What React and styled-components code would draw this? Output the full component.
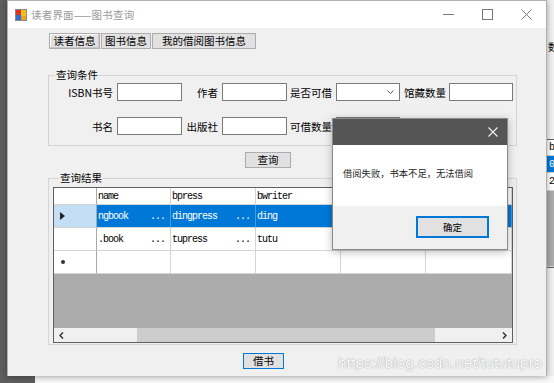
import React from 'react';
import styled, { createGlobalStyle } from 'styled-components';

const GlobalStyle = createGlobalStyle`
  html, body {
    margin: 0;
    padding: 0;
  }
  body {
    width: 554px;
    height: 383px;
    overflow: hidden;
    font-family: "Noto Sans CJK SC", "Noto Sans", sans-serif;
  }
  * {
    box-sizing: border-box;
  }
`;

const cjk = `"Noto Sans CJK SC", "Noto Sans", sans-serif`;
const mono = `"Liberation Mono", "DejaVu Sans Mono", monospace`;

// 桌面和后面的窗口
const Desktop = styled.div`
  position: relative;
  width: 554px;
  height: 383px;
  overflow: hidden;
  background: #f9f9f9;
`;

const DarkWindow = styled.div`
  position: absolute;
  left: 0;
  top: 0;
  width: 35px;
  height: 383px;
  background: #5e5e5e;
`;

const BackWindow = styled.div`
  position: absolute;
  left: 546px;
  top: 0;
  width: 30px;
  height: 376px;
  background: #f0f0f0;
  display: flex;
  flex-direction: column;
  font-family: ${mono};
  font-size: 10px;
  overflow: hidden;
`;

const BackLabel = styled.div`
  margin: 39px 0 0 2px;
  font-family: ${cjk};
  font-size: 10.5px;
  height: 14px;
`;

const BackGrid = styled.div`
  margin-top: 86px;
  border: 1px solid #646464;
  border-right: none;
  display: flex;
  flex-direction: column;
`;

const BackRow = styled.div`
  height: ${(p) => p.$h}px;
  padding-left: 2px;
  display: flex;
  align-items: center;
  background: ${(p) => p.$bg || '#fff'};
  color: ${(p) => (p.$bg === '#0078d7' ? '#fff' : '#000')};
  border-bottom: 1px solid #d0d0d0;
`;

// 主窗口
const Window = styled.div`
  position: absolute;
  left: 7px;
  top: 0;
  width: 540px;
  height: 376px;
  display: flex;
  flex-direction: column;
  box-shadow: 0 1px 6px rgba(0, 0, 0, 0.35);
  border: 1px solid #b0b0b0;
  border-bottom: none;
`;

const TitleBar = styled.div`
  height: 27px;
  flex-shrink: 0;
  background: #fff;
  display: flex;
  align-items: center;
  padding-left: 7px;
`;

const TitleText = styled.span`
  margin-left: 4px;
  font-size: 10.5px;
  color: #9a9a9a;
  letter-spacing: 0.2px;
`;

const Controls = styled.div`
  margin-left: auto;
  display: flex;
  height: 100%;
`;

const ControlButton = styled.div`
  width: 39px;
  height: 100%;
  display: flex;
  align-items: center;
  justify-content: center;
`;

const Body = styled.div`
  position: relative;
  flex: 1;
  background: #f0f0f0;
  padding: 5px 0 0 40px;
  display: flex;
  flex-direction: column;
  align-items: flex-start;
`;

const Tabs = styled.div`
  display: flex;
  gap: 1px;
  margin-left: 1px;
`;

const Button = styled.div`
  width: ${(p) => p.$w}px;
  height: ${(p) => p.$h || 16}px;
  background: #e1e1e1;
  border: ${(p) => (p.$focus ? '1px solid #0078d7' : '1px solid #adadad')};
  font-size: 10.5px;
  color: #000;
  display: flex;
  align-items: center;
  justify-content: center;
  white-space: nowrap;
  line-height: 1;
  margin-left: ${(p) => p.$ml || 0}px;
  margin-top: ${(p) => p.$mt || 0}px;
  box-shadow: ${(p) => (p.$raised ? 'inset -1px -1px 0 #c8c8c8, inset 1px 1px 0 #fff' : 'none')};
`;

const Group = styled.fieldset`
  margin: ${(p) => p.$mt}px 0 0 0;
  width: 469px;
  border: 1px solid #d5d5d5;
  padding: ${(p) => p.$pad};
  min-width: 0;
`;

const Legend = styled.legend`
  margin-left: 6px;
  padding: 0 1px;
  font-size: 10.5px;
  line-height: 14px;
  color: #000;
`;

const FormGrid = styled.div`
  display: grid;
  grid-template-columns: 68px 65px 40px 65px 49px 64px 49px 64px;
  grid-auto-rows: 18px;
  row-gap: 16px;
`;

const Label = styled.div`
  font-size: 10.5px;
  color: #000;
  display: flex;
  align-items: center;
  justify-content: flex-end;
  padding-right: ${(p) => p.$pr || 4}px;
  white-space: nowrap;
`;

const TextBox = styled.div`
  background: #fff;
  border: 1px solid #7a7a7a;
`;

const Combo = styled(TextBox)`
  display: flex;
  align-items: center;
  justify-content: flex-end;
  padding-right: 5px;
`;

// 数据表格
const DataGrid = styled.div`
  width: 460px;
  height: 156px;
  border: 1px solid #5f5f5f;
  background: #ababab;
  display: flex;
  flex-direction: column;
  font-family: ${mono};
  font-size: 10px;
  letter-spacing: -1px;
`;

const GridRow = styled.div`
  display: grid;
  grid-template-columns: 43px 74px 85px 85px 85px 1fr;
  height: ${(p) => p.$h}px;
  flex-shrink: 0;
`;

const Cell = styled.div`
  background: ${(p) => (p.$selected ? '#0078d7' : '#fff')};
  color: ${(p) => (p.$selected ? '#fff' : '#000')};
  border-right: 1px solid ${(p) => (p.$selected ? '#4a9ae0' : '#d4d4d4')};
  border-bottom: 1px solid #d4d4d4;
  display: flex;
  align-items: center;
  justify-content: space-between;
  padding: 0 5px 0 1px;
  white-space: nowrap;
  overflow: hidden;
`;

const RowHeader = styled(Cell)`
  background: ${(p) => (p.$current ? '#c3def5' : '#fff')};
  border-right: 1px solid #a8a8a8;
  justify-content: flex-start;
  padding-left: 6px;
  color: #000;
`;

const Dots = styled.span`
  letter-spacing: -1px;
`;

const EmptyArea = styled.div`
  flex: 1;
`;

const HScroll = styled.div`
  height: 14px;
  flex-shrink: 0;
  background: #f0f0f0;
  display: flex;
  align-items: center;
`;

const ScrollArrow = styled.div`
  height: 100%;
  display: flex;
  align-items: center;
  justify-content: ${(p) => (p.$right ? 'flex-end' : 'flex-start')};
  padding: 0 5px;
  width: ${(p) => p.$w}px;
`;

const Thumb = styled.div`
  width: 298px;
  height: 100%;
  background: #cdcdcd;
`;

// 消息框
const Dialog = styled.div`
  position: absolute;
  left: 324px;
  top: 90px;
  width: 176px;
  height: 132px;
  border: 1px solid #8a8a8a;
  box-shadow: 0 2px 8px rgba(0, 0, 0, 0.28);
  background: #f0f0f0;
  display: flex;
  flex-direction: column;
`;

const DialogTitle = styled.div`
  height: 26px;
  background: #555555;
  display: flex;
  align-items: center;
  justify-content: flex-end;
  padding-right: 9px;
`;

const DialogBody = styled.div`
  height: 61px;
  background: #fff;
  display: flex;
  align-items: center;
  padding: 0 0 6px 10px;
  font-size: 9.3px;
  color: #1e1e1e;
`;

const DialogFooter = styled.div`
  flex: 1;
  display: flex;
  align-items: center;
  justify-content: flex-end;
  padding: 0 18px 2px 0;
`;

const OkButton = styled.div`
  width: 73px;
  height: 22px;
  background: #e1e1e1;
  border: 2px solid #0078d7;
  font-size: 9.5px;
  display: flex;
  align-items: center;
  justify-content: center;
`;

const Watermark = styled.div`
  position: absolute;
  left: 330px;
  top: 326px;
  font-family: "Liberation Sans", Arial, sans-serif;
  font-size: 15.5px;
  color: #fbfbfb;
  text-shadow: 0 0 1px rgba(0, 0, 0, 0.35), 0 0 2px rgba(0, 0, 0, 0.12);
  white-space: nowrap;
`;

const AppIcon = () => (
  <svg width="12" height="12" viewBox="0 0 12 12">
    <rect x="0.5" y="0.5" width="11" height="11" fill="#fff" stroke="#8a8a8a" />
    <rect x="1" y="1" width="5" height="5" fill="#e0301e" />
    <rect x="6" y="1" width="5" height="6" fill="#f4c020" />
    <rect x="1" y="6" width="5" height="5" fill="#2a6fd6" />
    <rect x="6" y="7" width="5" height="4" fill="#f0a020" />
  </svg>
);

const rows = [
  { name: 'ngbook', press: 'dingpress', writer: 'ding', selected: true },
  { name: '.book', press: 'tupress', writer: 'tutu' },
];

export default function App() {
  return (
    <Desktop>
      <GlobalStyle />
      <DarkWindow />
      <BackWindow>
        <BackLabel>数</BackLabel>
        <BackGrid>
          <BackRow $h={16}>b</BackRow>
          <BackRow $h={17} $bg="#0078d7">0</BackRow>
          <BackRow $h={18}>21</BackRow>
          <BackRow $h={76} $bg="#ababab" />
        </BackGrid>
      </BackWindow>

      <Window>
        <TitleBar>
          <AppIcon />
          <TitleText>读者界面——图书查询</TitleText>
          <Controls>
            <ControlButton>
              <svg width="11" height="11" viewBox="0 0 11 11">
                <line x1="0" y1="5.5" x2="11" y2="5.5" stroke="#777" strokeWidth="1" />
              </svg>
            </ControlButton>
            <ControlButton>
              <svg width="11" height="11" viewBox="0 0 11 11">
                <rect x="0.5" y="0.5" width="10" height="10" fill="none" stroke="#777" strokeWidth="1" />
              </svg>
            </ControlButton>
            <ControlButton>
              <svg width="11" height="11" viewBox="0 0 11 11">
                <path d="M0.5 0.5 L10.5 10.5 M10.5 0.5 L0.5 10.5" stroke="#777" strokeWidth="1" />
              </svg>
            </ControlButton>
          </Controls>
        </TitleBar>

        <Body>
          <Tabs>
            <Button $w={51} $raised>读者信息</Button>
            <Button $w={50}>图书信息</Button>
            <Button $w={104}>我的借阅图书信息</Button>
          </Tabs>

          <Group $mt={19} $pad="1px 3px 10px 0">
            <Legend>查询条件</Legend>
            <FormGrid>
              <Label>ISBN书号</Label>
              <TextBox />
              <Label>作者</Label>
              <TextBox />
              <Label>是否可借</Label>
              <Combo>
                <svg width="7" height="4" viewBox="0 0 7 4">
                  <polyline points="0.5,0.5 3.5,3.5 6.5,0.5" fill="none" stroke="#555" strokeWidth="1" />
                </svg>
              </Combo>
              <Label $pr={3}>馆藏数量</Label>
              <TextBox />

              <Label>书名</Label>
              <TextBox />
              <Label>出版社</Label>
              <TextBox />
              <Label>可借数量</Label>
              <TextBox />
            </FormGrid>
          </Group>

          <Button $w={46} $ml={197} $mt={6}>查询</Button>

          <Group $mt={3} $pad="2px 3px 1px 4px">
            <Legend>查询结果</Legend>
            <DataGrid>
              <GridRow $h={17}>
                <RowHeader />
                <Cell>name</Cell>
                <Cell>bpress</Cell>
                <Cell>bwriter</Cell>
                <Cell />
                <Cell />
              </GridRow>
              {rows.map((r, i) => (
                <GridRow $h={23} key={i}>
                  <RowHeader $current={r.selected}>
                    {r.selected && (
                      <svg width="5" height="8" viewBox="0 0 5 8">
                        <polygon points="0,0 5,4 0,8" fill="#222" />
                      </svg>
                    )}
                  </RowHeader>
                  <Cell $selected={r.selected}>
                    <span>{r.name}</span>
                    <Dots>...</Dots>
                  </Cell>
                  <Cell $selected={r.selected}>
                    <span>{r.press}</span>
                    <Dots>...</Dots>
                  </Cell>
                  <Cell $selected={r.selected}>{r.writer}</Cell>
                  <Cell $selected={r.selected} />
                  <Cell $selected={r.selected} />
                </GridRow>
              ))}
              <GridRow $h={23}>
                <RowHeader>
                  <svg width="6" height="6" viewBox="0 0 6 6">
                    <circle cx="3" cy="3" r="2" fill="#333" />
                  </svg>
                </RowHeader>
                <Cell />
                <Cell />
                <Cell />
                <Cell />
                <Cell />
              </GridRow>
              <EmptyArea />
              <HScroll>
                <ScrollArrow $w={83}>
                  <svg width="5" height="7" viewBox="0 0 5 7">
                    <polyline points="4,0.5 1,3.5 4,6.5" fill="none" stroke="#333" strokeWidth="1.5" />
                  </svg>
                </ScrollArrow>
                <Thumb />
                <ScrollArrow $w={77} $right>
                  <svg width="5" height="7" viewBox="0 0 5 7">
                    <polyline points="1,0.5 4,3.5 1,6.5" fill="none" stroke="#333" strokeWidth="1.5" />
                  </svg>
                </ScrollArrow>
              </HScroll>
            </DataGrid>
          </Group>

          <Button $w={41} $ml={195} $mt={8} $focus>借书</Button>

          <Watermark>https://blog.csdn.net/tututupro</Watermark>

          <Dialog>
            <DialogTitle>
              <svg width="10" height="10" viewBox="0 0 10 10">
                <path d="M0.5 0.5 L9.5 9.5 M9.5 0.5 L0.5 9.5" stroke="#f0f0f0" strokeWidth="1.1" />
              </svg>
            </DialogTitle>
            <DialogBody>借阅失败，书本不足，无法借阅</DialogBody>
            <DialogFooter>
              <OkButton>确定</OkButton>
            </DialogFooter>
          </Dialog>
        </Body>
      </Window>
    </Desktop>
  );
}
